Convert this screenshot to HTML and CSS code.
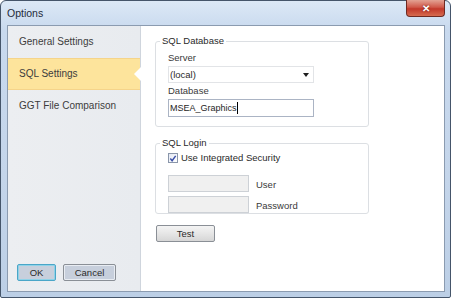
FILE: index.html
```html
<!DOCTYPE html>
<html lang="en">
<head>
    <meta charset="UTF-8">
    <title>Options</title>
    <link rel="stylesheet" href="styles.css">
</head>
<body>
    <div class="window">
        <div class="titlebar">
            <span class="title">Options</span>
            <button class="close-btn">&#x2715;</button>
        </div>

        <div class="client">
            <div class="sidebar">
                <div class="nav-item">General Settings</div>
                <div class="nav-item active">SQL Settings</div>
                <div class="nav-item">GGT File Comparison</div>

                <div class="dialog-buttons">
                    <button class="btn btn-ok">OK</button>
                    <button class="btn btn-cancel">Cancel</button>
                </div>
            </div>

            <div class="content">
                <fieldset class="group group-db">
                    <legend>SQL Database</legend>
                    <label class="field-label">Server</label>
                    <div class="select">
                        <span>(local)</span>
                        <span class="caret"></span>
                    </div>
                    <label class="field-label field-label-db">Database</label>
                    <div class="input">MSEA_Graphics<span class="cursor"></span></div>
                </fieldset>

                <fieldset class="group group-login">
                    <legend>SQL Login</legend>
                    <label class="check">
                        <span class="checkbox">
                            <svg width="9" height="9" viewBox="0 0 9 9"><path d="M1.5 4.5 L3.5 7 L7.5 1.5" fill="none" stroke="#3a4fa8" stroke-width="1.6"/></svg>
                        </span>
                        Use Integrated Security
                    </label>
                    <div class="cred-row">
                        <div class="input disabled"></div>
                        <span>User</span>
                    </div>
                    <div class="cred-row">
                        <div class="input disabled"></div>
                        <span>Password</span>
                    </div>
                </fieldset>

                <button class="btn btn-test">Test</button>
            </div>
        </div>
    </div>
</body>
</html>
```

FILE: styles.css
```css
* {
    margin: 0;
    padding: 0;
    box-sizing: border-box;
}

body {
    background: #ffffff;
    font-family: 'Liberation Sans', Arial, sans-serif;
    font-size: 9.5px;
    color: #2a2a2a;
}

.window {
    width: 451px;
    height: 298px;
    border: 1px solid #45556a;
    border-radius: 6px 6px 2px 2px;
    background: linear-gradient(180deg, #dce8f6 0%, #c8d9ee 10%, #c4d5ea 60%, #bccfe6 100%);
    display: flex;
    flex-direction: column;
    padding: 0 5px 5px 6px;
}

.titlebar {
    height: 24px;
    display: flex;
    align-items: flex-start;
    justify-content: space-between;
}

.title {
    font-size: 10.5px;
    color: #1e2a3a;
    margin-top: 6px;
}

.close-btn {
    width: 39px;
    height: 17px;
    margin-top: -1px;
    border: 1px solid #6e2a22;
    border-top: none;
    border-radius: 0 0 4px 4px;
    background: linear-gradient(180deg, #e3a293 0%, #d0594a 45%, #c2382a 55%, #d66b4f 100%);
    color: #ffffff;
    font-size: 10px;
    font-weight: bold;
    line-height: 15px;
    text-shadow: 0 0 2px #6a1a10;
}

.client {
    flex: 1;
    display: flex;
    border: 1px solid #8b9bb0;
    background: #ffffff;
}

.sidebar {
    width: 133px;
    background: linear-gradient(90deg, #eceef1 0%, #e8ebef 100%);
    border-right: 1px solid #cfd5dd;
    display: flex;
    flex-direction: column;
}

.nav-item {
    height: 32px;
    line-height: 31px;
    padding-left: 11px;
    font-size: 10px;
    color: #3c3c3c;
    position: relative;
}

.nav-item.active {
    background: #fde49c;
    border-top: 1px solid #f5d48a;
    border-bottom: 1px solid #f5d48a;
    line-height: 30px;
}

.nav-item.active::after {
    content: '';
    position: absolute;
    right: -1px;
    top: 8px;
    border-top: 7px solid transparent;
    border-bottom: 7px solid transparent;
    border-right: 7px solid #ffffff;
}

.dialog-buttons {
    margin-top: auto;
    display: flex;
    gap: 7px;
    padding: 0 0 10px 9px;
}

.btn {
    font-family: 'Liberation Sans', Arial, sans-serif;
    font-size: 9.5px;
    color: #2a2a2a;
    height: 17px;
    border: 1px solid #8a8f96;
    border-radius: 2px;
    background: linear-gradient(180deg, #f4f4f4 0%, #e6e6e6 50%, #d6d6d6 100%);
}

.btn-ok {
    width: 39px;
    border-color: #4aa6c8;
    background: #c7cfdc;
    box-shadow: inset 0 0 0 1px #8fd2e8;
}

.btn-cancel {
    width: 53px;
    background: #c7cfdc;
    box-shadow: inset 0 0 0 1px #e8ecf2;
}

.content {
    flex: 1;
    padding: 9px 0 0 14px;
}

.group {
    width: 214px;
    border: 1px solid #dcdfe3;
    border-radius: 3px;
    padding: 0 0 0 12px;
}

.group legend {
    padding: 0 2px;
    margin-left: -8px;
    color: #2a2a2a;
    line-height: 12px;
}

.group-db {
    height: 92px;
}

.field-label {
    display: block;
    margin-top: 4px;
    line-height: 14px;
    color: #3a3a3a;
}

.field-label-db {
    margin-top: 1px;
}

.field-label + .input {
    margin-top: 1px;
}

.select {
    width: 146px;
    height: 17px;
    margin-top: 1px;
    border: 1px solid #e2e4e7;
    display: flex;
    align-items: center;
    justify-content: space-between;
    padding: 0 4px 0 1px;
    line-height: 15px;
}

.caret {
    border-left: 3px solid transparent;
    border-right: 3px solid transparent;
    border-top: 4px solid #1e1e1e;
}

.input {
    width: 146px;
    height: 18px;
    border: 1px solid #abb4c4;
    line-height: 16px;
    padding-left: 1px;
    font-size: 9px;
    color: #1e1e1e;
}

.cursor {
    display: inline-block;
    width: 1px;
    height: 12px;
    background: #000000;
    vertical-align: -3px;
}

.group-login {
    height: 77px;
    margin-top: 10px;
}

.check {
    display: flex;
    align-items: center;
    gap: 3px;
    margin-top: 2px;
    line-height: 14px;
}

.checkbox {
    width: 10px;
    height: 10px;
    border: 1px solid #8a96aa;
    background: linear-gradient(135deg, #e4e9f4 0%, #ffffff 100%);
    display: flex;
    align-items: center;
    justify-content: center;
}

.cred-row {
    display: flex;
    align-items: center;
    gap: 7px;
    margin-top: 4px;
}

.check + .cred-row {
    margin-top: 10px;
}

.cred-row .input {
    width: 81px;
    height: 17px;
    border-color: #cdd1d6;
    background: #f0f0f0;
}

.cred-row span {
    color: #3a3a3a;
    padding-top: 1px;
}

.btn-test {
    width: 59px;
    height: 17px;
    margin-top: 11px;
    margin-left: 1px;
}
```
